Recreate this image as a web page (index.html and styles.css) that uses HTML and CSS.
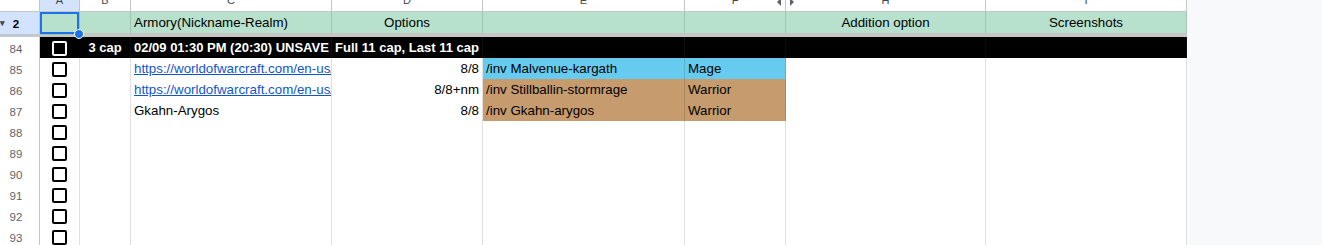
FILE: index.html
```
<!DOCTYPE html>
<html lang="en">
<head>
  <meta charset="UTF-8" />
  <title>Raid signups</title>
  <link rel="stylesheet" href="styles.css">
</head>
<body>
  <div class="sheet">
    <div class="row letters">
      <div class="corner"></div>
      <div class="col sel"><span>A</span></div>
      <div class="col"><span>B</span></div>
      <div class="col"><span>C</span></div>
      <div class="col"><span>D</span></div>
      <div class="col"><span>E</span></div>
      <div class="col hidden-next"><span>F</span><i class="arrow left"></i><i class="arrow right"></i></div>
      <div class="col"><span>H</span></div>
      <div class="col"><span>I</span></div>
      <div class="pad"></div>
    </div>

    <div class="row head">
      <div class="num selrow"><b class="fold">&#9662;</b><b>2</b></div>
      <div class="cell picked"><span class="handle"></span></div>
      <div class="cell"></div>
      <div class="cell">Armory(Nickname-Realm)</div>
      <div class="cell center">Options</div>
      <div class="cell"></div>
      <div class="cell"></div>
      <div class="cell center">Addition option</div>
      <div class="cell center">Screenshots</div>
      <div class="pad"></div>
    </div>

    <div class="divider"><div class="bar"></div><div class="pad"></div></div>

    <div class="row dark">
      <div class="num">84</div>
      <div class="cell box"><span class="check"></span></div>
      <div class="cell center">3 cap</div>
      <div class="cell">02/09 01:30 PM (20:30) UNSAVE</div>
      <div class="cell center">Full 11 cap, Last 11 cap</div>
      <div class="cell"></div>
      <div class="cell"></div>
      <div class="cell"></div>
      <div class="cell"></div>
      <div class="pad"></div>
    </div>

    <div class="row">
      <div class="num">85</div>
      <div class="cell box"><span class="check"></span></div>
      <div class="cell"></div>
      <div class="cell"><a href="#">https://worldofwarcraft.com/en-us/character/us/kargath/malvenue</a></div>
      <div class="cell right">8/8</div>
      <div class="cell mage">/inv Malvenue-kargath</div>
      <div class="cell mage">Mage</div>
      <div class="cell"></div>
      <div class="cell"></div>
      <div class="pad"></div>
    </div>

    <div class="row">
      <div class="num">86</div>
      <div class="cell box"><span class="check"></span></div>
      <div class="cell"></div>
      <div class="cell"><a href="#">https://worldofwarcraft.com/en-us/character/us/stormrage/stillballin</a></div>
      <div class="cell right">8/8+nm</div>
      <div class="cell warrior">/inv Stillballin-stormrage</div>
      <div class="cell warrior">Warrior</div>
      <div class="cell"></div>
      <div class="cell"></div>
      <div class="pad"></div>
    </div>

    <div class="row">
      <div class="num">87</div>
      <div class="cell box"><span class="check"></span></div>
      <div class="cell"></div>
      <div class="cell">Gkahn-Arygos</div>
      <div class="cell right">8/8</div>
      <div class="cell warrior">/inv Gkahn-arygos</div>
      <div class="cell warrior">Warrior</div>
      <div class="cell"></div>
      <div class="cell"></div>
      <div class="pad"></div>
    </div>

    <div class="row"><div class="num">88</div><div class="cell box"><span class="check"></span></div><div class="cell"></div><div class="cell"></div><div class="cell"></div><div class="cell"></div><div class="cell"></div><div class="cell"></div><div class="cell"></div><div class="pad"></div></div>
    <div class="row"><div class="num">89</div><div class="cell box"><span class="check"></span></div><div class="cell"></div><div class="cell"></div><div class="cell"></div><div class="cell"></div><div class="cell"></div><div class="cell"></div><div class="cell"></div><div class="pad"></div></div>
    <div class="row"><div class="num">90</div><div class="cell box"><span class="check"></span></div><div class="cell"></div><div class="cell"></div><div class="cell"></div><div class="cell"></div><div class="cell"></div><div class="cell"></div><div class="cell"></div><div class="pad"></div></div>
    <div class="row"><div class="num">91</div><div class="cell box"><span class="check"></span></div><div class="cell"></div><div class="cell"></div><div class="cell"></div><div class="cell"></div><div class="cell"></div><div class="cell"></div><div class="cell"></div><div class="pad"></div></div>
    <div class="row"><div class="num">92</div><div class="cell box"><span class="check"></span></div><div class="cell"></div><div class="cell"></div><div class="cell"></div><div class="cell"></div><div class="cell"></div><div class="cell"></div><div class="cell"></div><div class="pad"></div></div>
    <div class="row"><div class="num">93</div><div class="cell box"><span class="check"></span></div><div class="cell"></div><div class="cell"></div><div class="cell"></div><div class="cell"></div><div class="cell"></div><div class="cell"></div><div class="cell"></div><div class="pad"></div></div>
  </div>
</body>
</html>
```

FILE: styles.css
```
:root {
  --grid: rgba(0, 0, 0, 0.12);
  --head-line: #c4c7c5;
  --select: #1a73e8;
  --select-bg: #d3e3fd;
  --header-green: #b7e1cd;
  --mage: #66cbee;
  --warrior: #c69b6d;
  --outside: #f8f9fa;
}

body {
  margin: 0;
  font-family: "Liberation Sans", Arial, sans-serif;
  font-size: 13.33px;
  color: #000;
  background: var(--outside);
  overflow: hidden;
}

.sheet {
  width: 1322px;
}

.row {
  display: grid;
  grid-template-columns: 40px 40px 51px 201px 151px 202px 101px 200px 201px 1fr;
  height: 21px;
}

.pad {
  background: var(--outside);
}

/* column letters */
.letters {
  height: 12px;
}

.corner,
.col {
  background: #fff;
  border-right: 1px solid var(--head-line);
  border-bottom: 1px solid var(--head-line);
  box-sizing: border-box;
  overflow: hidden;
  position: relative;
  text-align: center;
  font-size: 11px;
  color: #444746;
}

.col span {
  display: block;
  line-height: 14px;
  margin-top: -7px;
}

.col.sel {
  background: var(--select-bg);
}

.arrow {
  position: absolute;
  top: 0;
  width: 0;
  height: 0;
  border-top: 4px solid transparent;
  border-bottom: 4px solid transparent;
  margin-top: -2px;
}

.arrow.left {
  right: 4px;
  border-right: 4px solid #5f6368;
}

.arrow.right {
  right: -9px;
  border-left: 4px solid #5f6368;
}

.hidden-next {
  overflow: visible;
  z-index: 1;
}

/* row numbers */
.num {
  background: #fff;
  border-right: 1px solid var(--head-line);
  border-bottom: 1px solid var(--grid);
  box-sizing: border-box;
  font-size: 11.5px;
  color: #5f6368;
  line-height: 20px;
  padding-top: 2px;
  text-align: center;
  padding-right: 7px;
}

.num.selrow {
  background: var(--select-bg);
  color: #000;
  position: relative;
}

.fold {
  position: absolute;
  left: 0;
  top: 1px;
  font-size: 9px;
  color: #444746;
}

/* cells */
.cell {
  border-right: 1px solid var(--grid);
  border-bottom: 1px solid var(--grid);
  box-sizing: border-box;
  background: #fff;
  padding: 2px 3px 0;
  line-height: 18px;
  white-space: nowrap;
  overflow: hidden;
}

.cell a {
  color: #1155cc;
}

.center {
  text-align: center;
}

.right {
  text-align: right;
}

.head .cell {
  background: var(--header-green);
}

.picked {
  position: relative;
  overflow: visible;
  box-shadow: inset 0 0 0 2px var(--select);
}

.handle {
  position: absolute;
  right: -5px;
  bottom: -5px;
  width: 8px;
  height: 8px;
  border-radius: 50%;
  background: var(--select);
  border: 1px solid #fff;
  z-index: 2;
}

.divider {
  display: grid;
  grid-template-columns: 1187px 1fr;
  height: 4px;
}

.divider .bar {
  background: #c7c7c7;
}

.dark .cell {
  background: #000;
  color: #fff;
  font-size: 13px;
  font-weight: bold;
  border-right-color: #0d0d0d;
}

.dark .cell.box {
  border-right-color: #000;
}

.mage {
  background: var(--mage);
}

.warrior {
  background: var(--warrior);
}

.box {
  display: flex;
  align-items: center;
  justify-content: center;
  padding: 0;
}

.check {
  width: 15px;
  height: 15px;
  box-sizing: border-box;
  border: 2px solid #000;
  border-radius: 2px;
}

.dark .check {
  border-color: #fff;
}
```
